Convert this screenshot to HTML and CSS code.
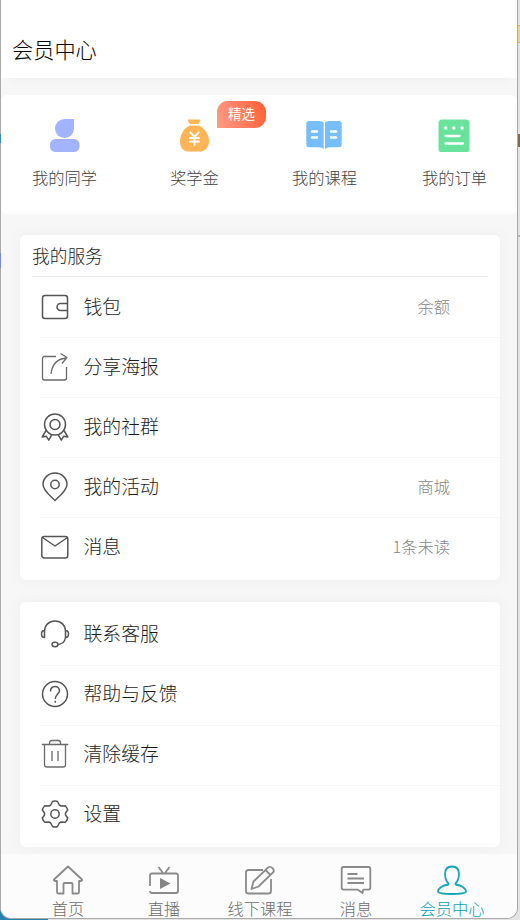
FILE: index.html
```
<!DOCTYPE html>
<html lang="zh-CN">
<head>
<meta charset="utf-8">
<title>会员中心</title>
<link rel="stylesheet" href="styles.css">
</head>
<body>
<div class="desktop">
  <i class="mark mark-yellow"></i><i class="mark mark-orange"></i><i class="mark mark-lower"></i>
  <i class="mark mark-blue"></i><i class="mark mark-violet"></i><i class="mark mark-corner"></i>
</div>
<div class="window">
  <header class="header"><h1>会员中心</h1></header>

  <section class="shortcuts">
    <div class="shortcut">
      <svg width="36" height="36" viewBox="0 0 36 36" fill="#a2b3ff"><path d="M28 3v9.500A9.500 9.500 0 1 1 18.500 3z"/><rect x="4" y="23" width="29.500" height="13" rx="5.500"/></svg>
      <span>我的同学</span>
    </div>
    <div class="shortcut">
      <svg width="36" height="36" viewBox="0 0 36 36"><path fill="#ffb455" d="M13 3.500h10.500q1.500 0 .7 1.300L22.500 8h-8.500l-2-3.200q-.7-1.300 1-1.300zM14 9.500h8.500C28 11.500 33 18.500 33 25c0 7-4 10-9 10.500h-11.500C7 35 4 32 4 25 4 18.500 8.500 11.500 14 9.500z"/><path fill="none" stroke="#fff" stroke-width="2" stroke-linecap="round" d="m14.500 16.500 4 4.500 4-4.500M18.500 21v8M14 22h9M14 25.500h9"/></svg>
      <span>奖学金</span>
      <b class="badge">精选</b>
    </div>
    <div class="shortcut">
      <svg width="36" height="36" viewBox="0 0 36 36"><path fill="#77bffc" d="M3 5h10.500q2.500 0 4.200 1.500V33q-2-1.700-5-1.700H2.500Q.3 31.300.3 29V7.500Q.3 5 3 5zM33 5H22.500Q20.500 5 19 6.500V33q2-1.700 5-1.700h9.500q2.200 0 2.200-2.300V7.500Q35.700 5 33 5z"/><path stroke="#fff" stroke-width="2.400" stroke-linecap="round" d="M6 15.500h5M6 21.500h5M25 15.500h5M25 21.500h5"/></svg>
      <span>我的课程</span>
    </div>
    <div class="shortcut">
      <svg width="36" height="36" viewBox="0 0 36 36"><rect x="2.500" y="3.500" width="31" height="33" rx="3.500" fill="#69e29b"/><g fill="#fff"><circle cx="9.700" cy="12" r="1.800"/><circle cx="17.800" cy="12" r="1.800"/><circle cx="26" cy="12" r="1.800"/></g><path stroke="#fff" stroke-width="2.300" stroke-linecap="round" d="M9.500 20h14M9.500 27.500h17.500"/></svg>
      <span>我的订单</span>
    </div>
  </section>

  <section class="card services">
    <h2>我的服务</h2>
    <div class="row">
      <svg class="icon" viewBox="0 0 30 30"><rect x="2.500" y="3.500" width="25" height="23" rx="2.500"/><path d="M27 11.500h-6.500a3.500 3.500 0 0 0 0 7H27"/></svg>
      <span>钱包</span><em>余额</em>
    </div>
    <div class="row">
      <svg class="icon thin" viewBox="0 0 30 30"><path d="M16 4.500H4.500a2 2 0 0 0-2 2V26a2 2 0 0 0 2 2h20a2 2 0 0 0 2-2V15M11 22C12 13 17 6.500 27 6M20.500 1.500l6.500 4-5 6"/></svg>
      <span>分享海报</span>
    </div>
    <div class="row">
      <svg class="icon" viewBox="0 0 30 30"><circle cx="15" cy="12.500" r="10.500"/><circle cx="15" cy="12.500" r="5"/><path d="M6 18.500 2.200 25l4-.8 2.500 4 3.300-5.800M24 18.500l3.800 6.500-4-.8-2.500 4-3.300-5.800"/></svg>
      <span>我的社群</span>
    </div>
    <div class="row">
      <svg class="icon" viewBox="0 0 30 30"><path d="M15 28.500C11 24.500 3 18.500 3 12.500a12 11.500 0 0 1 24 0c0 6-8 12-12 16z"/><circle cx="15" cy="12.500" r="4.200"/></svg>
      <span>我的活动</span><em>商城</em>
    </div>
    <div class="row">
      <svg class="icon" viewBox="0 0 30 30"><rect x="1.800" y="4.500" width="26" height="21.500" rx="2.500"/><path d="m2.500 5.500 12.500 8.500 12.500-8.500"/></svg>
      <span>消息</span><em>1条未读</em>
    </div>
  </section>

  <section class="card support">
    <div class="row">
      <svg class="icon" viewBox="0 0 30 30"><path d="M4.500 18.500V13C4.500 6 9 2 15 2s10.500 4 10.500 11v5.500M4.500 11.500C2.500 11.500 1.500 13 1.500 15s1 3.500 3 3.500zM25.500 11.500c2 0 3 1.500 3 3.500s-1 3.500-3 3.500C25 22 22.500 25 18 25.500"/><ellipse cx="15" cy="25.500" rx="3" ry="2.200"/></svg>
      <span>联系客服</span>
    </div>
    <div class="row">
      <svg class="icon" viewBox="0 0 30 30"><circle cx="15" cy="15" r="12.500"/><path d="M10.500 12.500c0-6.500 9-6.500 9-.8 0 3.300-4.200 3.600-4.200 8.300M15.300 21.800v2"/></svg>
      <span>帮助与反馈</span>
    </div>
    <div class="row">
      <svg class="icon thin" viewBox="0 0 30 30"><path d="M1.800 5.500h26.500M9.500 5V4q0-2.500 2.500-2.500h6q2.500 0 2.500 2.500v1M4.500 6v19.500q0 2.500 2.500 2.500h16q2.500 0 2.500-2.500V6M12 12v10M18 12v10"/></svg>
      <span>清除缓存</span>
    </div>
    <div class="row">
      <svg class="icon" viewBox="0 0 30 30"><path d="M12.500 2.500q2.500-1 5 0l1.800 3.500 1.700 1 4.200-.2q2 1.700 2.500 4.200L25.500 14v2l2.200 3q-.6 2.700-2.500 4.300l-4.200-.3-1.700 1-1.800 3.500q-2.500 1-5 0L10.700 24 9 23l-4.200.3Q3 21.700 2.300 19l2.200-3v-2l-2.200-3Q3 8.500 4.800 6.800L9 7l1.700-1z"/><circle cx="15" cy="15" r="4.200"/></svg>
      <span>设置</span>
    </div>
  </section>

  <nav class="tabs">
    <a class="tab">
      <svg viewBox="0 0 32 32"><path d="M16 2.500 2 15.500q-.5 1.500 1 1.500h2v11q0 1.500 1.500 1.500h5V20q0-1 1-1h7q1 0 1 1v9.500h5q1.500 0 1.500-1.500V17h2q1.500 0 1-1.500z"/></svg>
      <span>首页</span>
    </a>
    <a class="tab">
      <svg viewBox="0 0 32 32"><path d="M2 22V11.500q0-2 2-2h24q2 0 2 2V27q0 2-2 2H4q-2 0-2-2M10.500 3l4.500 6M21.500 3 17 9"/><path fill="#858585" stroke="none" d="m12 14 10.500 5.500L12 25z"/></svg>
      <span>直播</span>
    </a>
    <a class="tab">
      <svg viewBox="0 0 32 32"><path d="M19 6H4.500Q2 6 2 8.500V27q0 2.500 2.500 2.500h20q2.500 0 2.500-2.500V15M7.500 25l2-7.500L24.500 3.200q1.800-1 4 1 2 2 .8 4L14.500 22.500zM21.500 6l5 5"/></svg>
      <span>线下课程</span>
    </a>
    <a class="tab">
      <svg viewBox="0 0 32 32"><path d="M3.500 3h25q1.800 0 1.800 1.800v19q0 1.800-1.800 1.800h-5.300L22.500 29l-5-3.400h-14q-1.800 0-1.800-1.800v-19Q1.700 3 3.500 3zM7.500 10h10M7.500 14.500h16.500M7.500 19h16.500"/></svg>
      <span>消息</span>
    </a>
    <a class="tab active">
      <svg viewBox="0 0 32 32"><path d="M16 2.500c4.500 0 7 3 7 7.500 0 4-1 7-3.500 9.500l.2 1C26 21.500 30 24.500 30 27.500 30 29 23 30 16 30S2 29 2 27.500c0-3 4-6 10.300-7l.2-1C10 17 9 14 9 10c0-4.500 2.500-7.500 7-7.500z"/></svg>
      <span>会员中心</span>
    </a>
  </nav>
</div>
</body>
</html>
```
FILE: styles.css
```
* { box-sizing: border-box; }
body {
  margin: 0;
  height: 920px;
  position: relative;
  overflow: hidden;
  background: #e3e3e3;
  font-family: "Noto Sans CJK SC", sans-serif;
  font-weight: 300;
  color: #1c1c1c;
}
h1, h2 { margin: 0; font-weight: 300; }

.desktop { position: absolute; inset: 0; }
.mark { position: absolute; }
.mark-yellow { right: 0; top: 25px; width: 3px; height: 18px; background: #ead681; border: solid #d5b94f; border-width: 1px 0; }
.mark-orange { right: 0; top: 134px; width: 3px; height: 13px; background: #8b6940; }
.mark-lower { right: 0; top: 235px; width: 3px; height: 2px; background: #b4b4b4; }
.mark-blue { left: 0; top: 134px; width: 1px; height: 9px; background: #3f87b4; z-index: 2; }
.mark-violet { left: 0; top: 253px; width: 1px; height: 15px; background: #7c8bcb; z-index: 2; }
.mark-corner { left: 0; bottom: 0; width: 48px; height: 14px; background: #2682ac; }

.window {
  position: relative;
  width: 518px;
  height: 919px;
  display: flex;
  flex-direction: column;
  overflow: hidden;
  background: #f7f7f7;
  border: solid #aaa;
  border-width: 0 1px 1px;
  border-radius: 0 0 11px 11px;
}
.header {
  flex: none;
  height: 78px;
  padding: 34px 0 0 11px;
  background: #fff;
  box-shadow: 0 8px 12px -8px rgba(0, 0, 0, .06);
}
.header h1 { font-size: 21.200px; line-height: 30px; color: #000; }

.shortcuts {
  flex: none;
  display: grid;
  grid-template-columns: repeat(4, 130px);
  height: 119px;
  margin-top: 17px;
  padding-top: 21px;
  background: #fff;
  border-radius: 6px;
  overflow: hidden;
}
.shortcut {
  position: relative;
  display: flex;
  flex-direction: column;
  align-items: center;
  height: 80px;
  margin: 0 1px 0 -2px;
  font-size: 16.250px;
  line-height: 24px;
  color: #3f3f3f;
}
.shortcut svg { margin: 0 2px 13px 0; }
.badge {
  position: absolute;
  left: 88px;
  top: -15px;
  width: 49px;
  height: 27px;
  border-radius: 11px 11px 11px 0;
  background: linear-gradient(75deg, #ff9b86, #ff5f36);
  color: #fff;
  font-size: 13.500px;
  font-weight: 400;
  line-height: 24px;
  text-align: center;
}

.card {
  flex: none;
  margin: 0 17px 0 19px;
  background: #fff;
  border-radius: 6px;
  box-shadow: 0 0 15px rgba(0, 0, 0, .045);
}
.services { height: 345px; margin-top: 21px; }
.services h2 {
  height: 42px;
  margin: 0 12px;
  border-bottom: 1px solid #ebebeb;
  font-size: 17.700px;
  line-height: 41px;
}
.support { height: 245px; margin-top: 22px; padding-top: 3px; }
.row {
  display: flex;
  align-items: center;
  height: 60px;
  margin-left: 19px;
  padding-right: 50px;
  font-size: 18.850px;
  line-height: 28px;
}
.support .row { padding-bottom: 2px; }
.row + .row { box-shadow: inset 0 1px #f7f7f7; }
.row span { margin-left: 13.500px; padding-bottom: 3px; }
.row em { margin-left: auto; padding-bottom: 3px; font-style: normal; font-size: 16.250px; color: #858585; }
.icon {
  width: 30px;
  height: 30px;
  margin-left: 1px;
  fill: none;
  stroke: #555;
  stroke-width: 1.500;
  stroke-linejoin: round;
}
.icon.thin { stroke: #6a6a6a; stroke-width: 1.300; }

.tabs {
  position: relative;
  flex: none;
  display: grid;
  grid-template-columns: repeat(5, 96px);
  height: 65px;
  margin-top: 7px;
  padding: 10px 0 0 19px;
  background: #fcfcfc;
}
.tab {
  display: flex;
  flex-direction: column;
  align-items: center;
  font-size: 16.250px;
  line-height: 24px;
  color: #6c6c6c;
}
.tab svg {
  width: 32px;
  height: 32px;
  fill: none;
  stroke: #8a8a8a;
  stroke-width: 1.800;
  stroke-linejoin: round;
}
.tab.active { color: #0e9cb2; }
.tab.active svg { stroke: #18a5b9; }
```
